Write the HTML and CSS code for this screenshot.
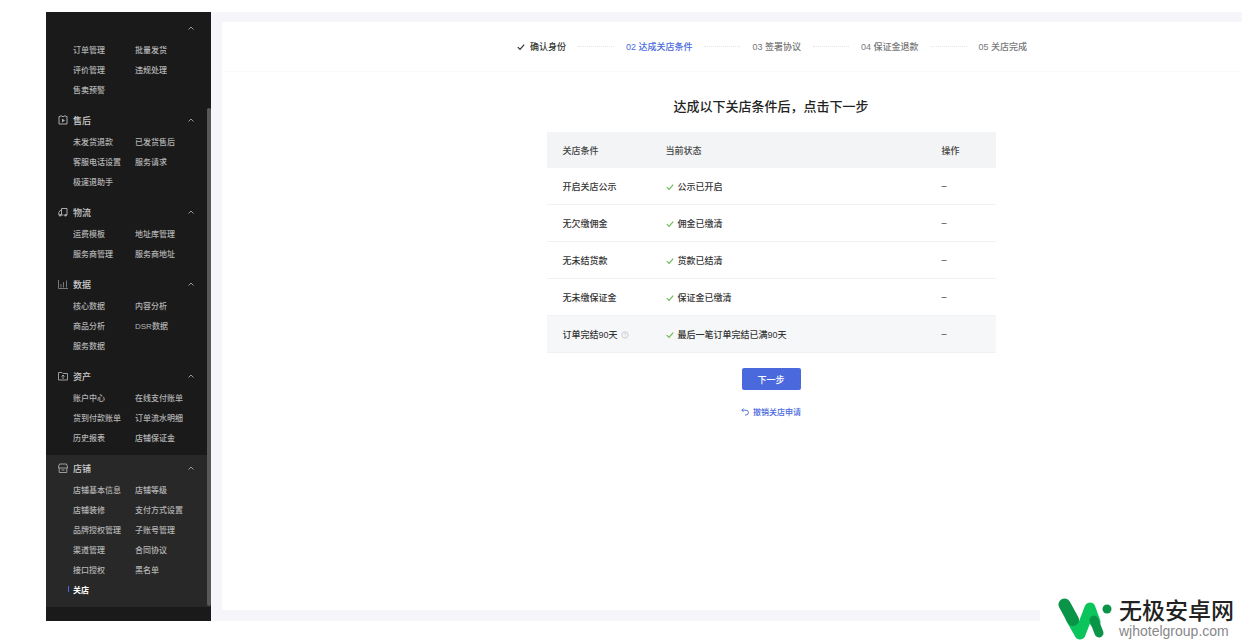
FILE: index.html
```html
<!DOCTYPE html>
<html lang="zh-CN">
<head>
<meta charset="utf-8">
<meta name="viewport" content="width=device-width, initial-scale=1">
<title>关店</title>
<link rel="stylesheet" href="styles.css">
</head>
<body>
<svg class="defs" aria-hidden="true">
  <symbol id="chevron" viewBox="0 0 8 8"><path d="M1.500 5.500 4 3 6.500 5.500" fill="none" stroke="currentColor"/></symbol>
  <symbol id="tick" viewBox="0 0 10 10"><path d="M1 5.200 3.800 8 9 2" fill="none" stroke="currentColor" stroke-width="1.500"/></symbol>
</svg>
<div class="app">
  <nav class="sidebar" aria-label="主导航">
    <section class="group">
      <button class="group-head" type="button" aria-label="收起"><svg class="chevron"><use href="#chevron"/></svg></button>
      <div class="links"><a href="#">订单管理</a><a href="#">批量发货</a><a href="#">评价管理</a><a href="#">违规处理</a><a href="#">售卖预警</a></div>
    </section>
    <section class="group">
      <button class="group-head" type="button"><svg class="icon" viewBox="0 0 10 10"><path d="M1 1.500h1M4 1.500h2M8 1.500h1v7.500H1V1.500M3 0v2M7 0v2" fill="none" stroke="currentColor"/><path d="M4 3.500 7 5.500 4 7.500z" fill="currentColor"/></svg>售后<svg class="chevron"><use href="#chevron"/></svg></button>
      <div class="links"><a href="#">未发货退款</a><a href="#">已发货售后</a><a href="#">客服电话设置</a><a href="#">服务请求</a><a href="#">极速退助手</a></div>
    </section>
    <section class="group">
      <button class="group-head" type="button"><svg class="icon" viewBox="0 0 10 10"><path d="M3.500 8V1.500h5.500V8H8M3.500 3.500H2L.800 5.500V8H1M3.500 8h2" fill="none" stroke="currentColor"/><circle cx="2.200" cy="8.300" r="1.200" fill="currentColor"/><circle cx="7.500" cy="8.300" r="1.200" fill="currentColor"/></svg>物流<svg class="chevron"><use href="#chevron"/></svg></button>
      <div class="links"><a href="#">运费模板</a><a href="#">地址库管理</a><a href="#">服务商管理</a><a href="#">服务商地址</a></div>
    </section>
    <section class="group">
      <button class="group-head" type="button"><svg class="icon dim" viewBox="0 0 10 10"><path d="M.5 1v8.500H10M3 8.500V5M5.500 8.500V3M8.500 8.500V1.500" fill="none" stroke="currentColor"/></svg>数据<svg class="chevron"><use href="#chevron"/></svg></button>
      <div class="links"><a href="#">核心数据</a><a href="#">内容分析</a><a href="#">商品分析</a><a href="#">DSR数据</a><a href="#">服务数据</a></div>
    </section>
    <section class="group">
      <button class="group-head" type="button"><svg class="icon" viewBox="0 0 10 10"><path d="M.5 9V1.500H4l1 1h4.500V9zM5 4v4M3.500 5.500 5 4l1.500 1.500" fill="none" stroke="currentColor" stroke-width=".9"/></svg>资产<svg class="chevron"><use href="#chevron"/></svg></button>
      <div class="links"><a href="#">账户中心</a><a href="#">在线支付账单</a><a href="#">货到付款账单</a><a href="#">订单流水明细</a><a href="#">历史报表</a><a href="#">店铺保证金</a></div>
    </section>
    <section class="group current">
      <button class="group-head" type="button"><svg class="icon" viewBox="0 0 10 10"><path d="M1.500 1h7l1 3v1h-9V4zM1.200 5v4.500h7.600V5M3.500 7h3" fill="none" stroke="currentColor" stroke-width=".9"/></svg>店铺<svg class="chevron"><use href="#chevron"/></svg></button>
      <div class="links"><a href="#">店铺基本信息</a><a href="#">店铺等级</a><a href="#">店铺装修</a><a href="#">支付方式设置</a><a href="#">品牌授权管理</a><a href="#">子账号管理</a><a href="#">渠道管理</a><a href="#">合同协议</a><a href="#">接口授权</a><a href="#">黑名单</a><a href="#" class="active" aria-current="page">关店</a></div>
    </section>
    <div class="scrollbar"></div>
  </nav>
  <main class="main">
    <div class="panel">
      <ol class="steps">
        <li class="done"><svg class="step-tick"><use href="#tick"/></svg>确认身份</li>
        <li class="now" aria-current="step">02 达成关店条件</li>
        <li>03 签署协议</li>
        <li>04 保证金退款</li>
        <li>05 关店完成</li>
      </ol>
      <div class="content">
        <h1>达成以下关店条件后，点击下一步</h1>
        <table class="conditions">
          <thead><tr><th class="c-name" scope="col">关店条件</th><th scope="col">当前状态</th><th class="c-action" scope="col">操作</th></tr></thead>
          <tbody>
            <tr><td>开启关店公示</td><td><svg class="tick"><use href="#tick"/></svg>公示已开启</td><td>–</td></tr>
            <tr><td>无欠缴佣金</td><td><svg class="tick"><use href="#tick"/></svg>佣金已缴清</td><td>–</td></tr>
            <tr><td>无未结货款</td><td><svg class="tick"><use href="#tick"/></svg>货款已结清</td><td>–</td></tr>
            <tr><td>无未缴保证金</td><td><svg class="tick"><use href="#tick"/></svg>保证金已缴清</td><td>–</td></tr>
            <tr class="hover"><td>订单完结90天<svg class="help" viewBox="0 0 8 8"><circle cx="4" cy="4" r="3.200" fill="none" stroke="currentColor"/><path d="M3 3.300c0-1.300 2-1.300 2 0 0 .7-1 .7-1 1.400M4 5.300v.8" fill="none" stroke="currentColor" stroke-width=".7"/></svg></td><td><svg class="tick"><use href="#tick"/></svg>最后一笔订单完结已满90天</td><td>–</td></tr>
          </tbody>
        </table>
        <button class="next" type="button">下一步</button>
        <a class="cancel" href="#"><svg class="undo" viewBox="0 0 8 8"><path d="M2.500.5.800 2.200 2.500 4M1 2.200h4a2.400 2.400 0 0 1 0 4.800H4" fill="none" stroke="currentColor" stroke-width=".9"/></svg>撤销关店申请</a>
      </div>
    </div>
  </main>
</div>
<div class="brand">
  <svg class="brand-logo" viewBox="0 0 54 43"><g fill="none" stroke-linecap="round" stroke-linejoin="round"><path d="M13 20 22 36 32 10 37 24" stroke="#0cc45c" stroke-width="11"/><path d="M6.500 6.500 15 22" stroke="#0a9447" stroke-width="12"/><path d="M36 22 41 35" stroke="#0a9447" stroke-width="9"/></g><circle cx="49" cy="11" r="4.500" fill="#0a9447"/></svg>
  <div class="brand-text"><strong>无极安卓网</strong><span>wjhotelgroup.com</span></div>
</div>
</body>
</html>
```
FILE: styles.css
```css
* { box-sizing: border-box; }

body {
  position: relative;
  min-height: 100vh;
  margin: 0;
  padding: 12px 0 23px 46px;
  background: #fff;
  color: #333;
  font-family: "Liberation Sans", "Noto Sans CJK SC", sans-serif;
  font-size: 9px;
}

a { color: inherit; text-decoration: none; }
button { margin: 0; padding: 0; border: 0; background: none; color: inherit; font: inherit; cursor: pointer; }
.defs { display: none; }
.app { display: flex; }

.sidebar {
  position: relative;
  flex: none;
  width: 165px;
  padding: 3px 0 14px;
  background: #1a1a1a;
  color: #b4b4b4;
}
.group { padding: 2px 0 8px; }
.group.current { background: #282828; }
.group-head {
  display: flex;
  align-items: center;
  gap: 5px;
  width: 100%;
  height: 22px;
  padding: 0 16px 0 12px;
  color: #ccc;
  font-weight: 500;
}
.icon { width: 10px; height: 10px; color: #aaa; }
.icon.dim { color: #777; }
.chevron { width: 8px; height: 8px; margin-left: auto; color: #999; }
.links {
  display: grid;
  grid-template-columns: 62px 1fr;
  grid-auto-rows: 20px;
  align-items: center;
  padding-left: 27px;
  font-size: 8px;
  font-weight: 500;
  white-space: nowrap;
}
.links .active {
  display: flex;
  align-items: center;
  gap: 4px;
  margin-left: -5px;
  color: #fff;
  font-weight: 700;
}
.links .active::before { content: ""; width: 1px; height: 6px; background: #4a69dd; }
.scrollbar {
  position: absolute;
  top: 96px;
  right: 0;
  bottom: 15px;
  width: 4px;
  border-radius: 2px;
  background: #585858;
}

.main {
  display: flex;
  flex: 1;
  min-width: 0;
  padding: 10px 0 11px 11px;
  background: #f5f5fa;
}
.panel { flex: 1; background: #fff; }
.steps {
  display: flex;
  justify-content: center;
  align-items: center;
  height: 50px;
  margin: 0;
  padding: 0 0 0 80px;
  border-bottom: 1px solid #fafafa;
  color: #777;
  font-weight: 500;
  list-style: none;
  white-space: nowrap;
}
.steps li { display: flex; align-items: center; }
.steps li + li::before {
  content: "";
  width: 36px;
  margin: 0 12px;
  border-top: 1px dotted #e4e4e4;
}
.steps .done { color: #333; }
.steps .now { color: #4a69dd; }
.step-tick { width: 8px; height: 8px; margin-right: 5px; }

.content {
  display: flex;
  flex-direction: column;
  align-items: center;
  padding: 24px 0 24px 78px;
}
h1 { margin: 0 0 14px; color: #222; font-size: 13px; font-weight: 500; line-height: 22px; }
.conditions {
  width: 449px;
  border-collapse: separate;
  border-spacing: 0;
  table-layout: fixed;
}
.c-name { width: 103px; }
.c-action { width: 70px; }
th, td { height: 37px; padding: 0 0 0 16px; font-weight: 500; text-align: left; white-space: nowrap; }
th { height: 36px; background: #f3f4f6; color: #444; }
td { border-bottom: 1px solid #f2f2f4; }
.hover td { background: #f6f7f9; }
.tick { width: 8px; height: 8px; margin-right: 4px; color: #6dbb57; vertical-align: -1px; }
.help { width: 8px; height: 8px; margin-left: 3px; color: #ccc; vertical-align: -1px; }
.next {
  width: 59px;
  height: 22px;
  margin-top: 15px;
  border-radius: 2px;
  background: #4a69dd;
  color: #fff;
  font-weight: 500;
}
.cancel {
  display: flex;
  align-items: center;
  gap: 4px;
  margin-top: 16px;
  color: #4a69dd;
  font-size: 8px;
  font-weight: 500;
}
.undo { width: 8px; height: 8px; }

.brand {
  position: absolute;
  right: 0;
  bottom: 0;
  display: flex;
  align-items: center;
  gap: 7px;
  width: 202px;
  height: 50px;
  padding-left: 18px;
  background: #fff;
}
.brand-logo { width: 54px; height: 43px; }
.brand-text { display: flex; flex-direction: column; }
.brand-text strong { color: #222; font-size: 23px; font-weight: 500; line-height: 24px; }
.brand-text span { color: #888; font-size: 14px; line-height: 16px; }
```
